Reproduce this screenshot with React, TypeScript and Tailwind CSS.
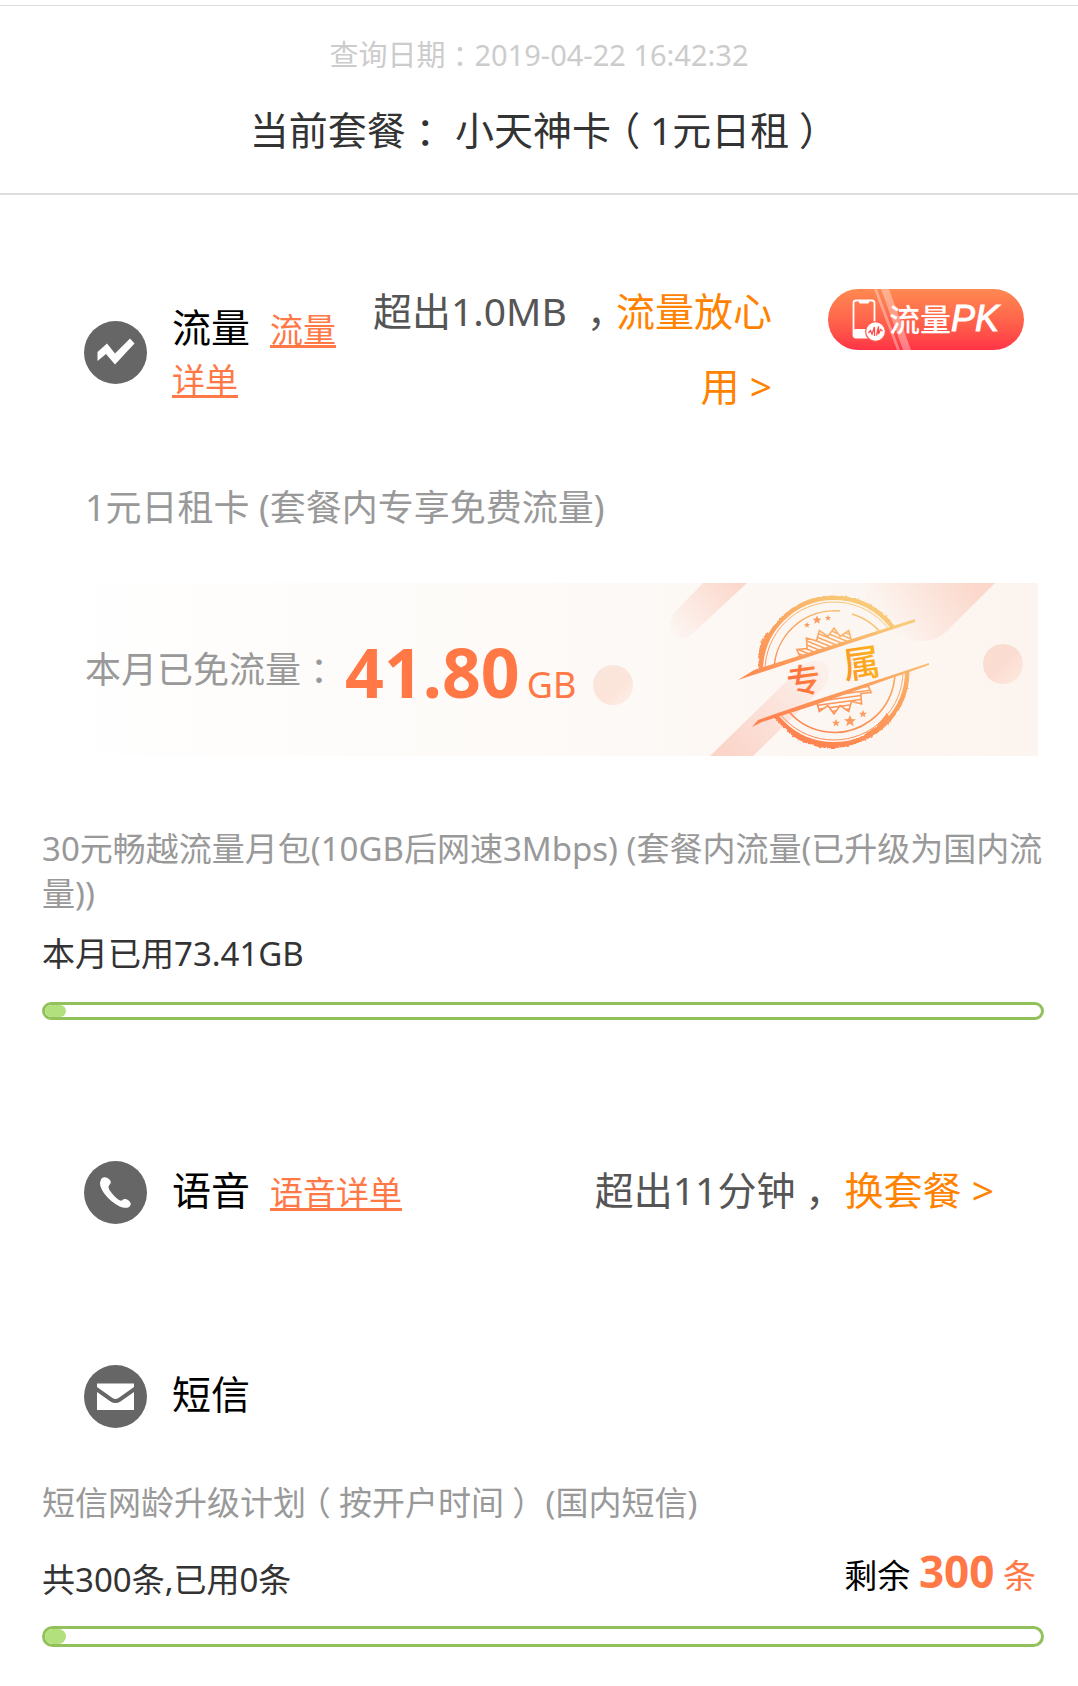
import React from 'react';

/** Full-width punctuation mark centred in its own em box. */
function Mark({ children }: { children: string }) {
  return (
    <span className="inline-block w-[1em] text-center leading-none [font-feature-settings:'halt'] font-['Noto_Sans_CJK_SC',sans-serif]">
      {children}
    </span>
  );
}

function TrendIcon() {
  return (
    <svg viewBox="0 0 63 63" className="size-[63px] shrink-0" aria-hidden="true">
      <circle cx="31.5" cy="31.5" r="31.5" fill="#666" />
      <path d="M13.5 31 L23 22.500 L31 32.500 L46 17.500 L50.500 22.500 L31 43.500 L22 33 L13.500 40 Z" fill="#fff" />
    </svg>
  );
}

function PhoneIcon() {
  return (
    <svg viewBox="0 0 63 63" className="size-[63px] shrink-0" aria-hidden="true">
      <circle cx="31.500" cy="31.500" r="31.500" fill="#666" />
      <path
        d="M17 18.500 C18 16 21 15.500 23.500 17 C26 18.500 27.500 20.500 26.500 22.500 C25.500 24 24.500 24.500 24.500 26.500 C25.500 30.500 32 37.500 36 39.500 C38.500 40.200 38.500 38 41 38 C43.500 38 46.500 40.500 46.800 43 C46.500 46 43.500 47.200 40 46.800 C29 44.500 15.500 30 16 21.500 Z"
        fill="#fff"
      />
    </svg>
  );
}

function MailIcon() {
  return (
    <svg viewBox="0 0 63 63" className="size-[63px] shrink-0" aria-hidden="true">
      <circle cx="31.500" cy="31.500" r="31.500" fill="#666" />
      <path d="M13 18.500 H50 V22 L34.500 33 Q31.500 35 28.500 33 L13 22 Z" fill="#fff" />
      <path d="M13 27 L26.500 36.500 Q31.500 39.500 36.500 36.500 L50 27 V45 H13 Z" fill="#fff" />
    </svg>
  );
}

function PkButton() {
  return (
    <button
      type="button"
      className="relative flex h-[61px] w-[196px] shrink-0 items-center overflow-hidden rounded-full bg-linear-to-b from-[#ff8951] to-[#ff3146] pl-[61px] text-white"
    >
      <svg viewBox="0 0 196 61" className="absolute inset-0 h-full w-full" aria-hidden="true">
        <path d="M46 0 H49 L72 61 H69 Z M53 0 H61 L83 61 H75 Z" fill="#fff" opacity="0.35" />
        <rect x="25.500" y="11.500" width="21" height="37" rx="2.500" fill="none" stroke="#fff" strokeWidth="1.800" />
        <rect x="31" y="12" width="10" height="2.500" rx="1" fill="#fff" />
        <rect x="25.500" y="40" width="21" height="9" rx="2" fill="#fff" />
        <circle cx="47.500" cy="42.500" r="10.500" fill="#ff5a4b" />
        <circle cx="47.500" cy="42.500" r="9.300" fill="#fff" />
        <path d="M40.500 44 L42.500 41.500 L44 45 L46.500 38 V47 M48.500 46.500 L50.500 37.500 V45 L52.500 40.500 L54.500 42" fill="none" stroke="#ff4a4a" strokeWidth="1.300" />
      </svg>
      <span className="relative pb-[2px] text-[31px] leading-none font-medium whitespace-nowrap">
        流量
        <span className="font-['Liberation_Sans',sans-serif] text-[36px] font-normal italic [-webkit-text-stroke:1px_white]">PK</span>
      </span>
    </button>
  );
}

const STAR = 'M0 -5 L1.500 -1.600 L5 -1.500 L2.200 0.800 L3.100 4.300 L0 2.300 L-3.100 4.300 L-2.200 0.800 L-5 -1.500 L-1.500 -1.600 Z';

const SPIKES = 18;
const BURST = Array.from({ length: SPIKES * 2 }, (_, i) => {
  const r = i % 2 ? 35 : 43;
  const a = (i * Math.PI) / SPIKES;
  return `${(792 + r * Math.sin(a)).toFixed(1)},${(88 - r * Math.cos(a)).toFixed(1)}`;
}).join(' ');

const HATCH_UPPER = Array.from({ length: 24 }, (_, i) => `M740 ${i * 4 + 12} l104 42`).join(' ');
const HATCH_LOWER = Array.from({ length: 24 }, (_, i) => `M740 ${i * 4 + 75} l104 -14`).join(' ');

function StampArt() {
  return (
    <svg
      viewBox="0 0 996 173"
      preserveAspectRatio="xMaxYMid slice"
      className="absolute inset-0 h-full w-full"
      aria-hidden="true"
    >
      <defs>
        <linearGradient id="ink" gradientUnits="userSpaceOnUse" x1="755" y1="150" x2="830" y2="25">
          <stop offset="0" stopColor="#ff8350" />
          <stop offset="0.550" stopColor="#fba25f" />
          <stop offset="1" stopColor="#f8cb78" />
        </linearGradient>
        <linearGradient id="word" gradientUnits="userSpaceOnUse" x1="745" y1="100" x2="835" y2="80">
          <stop offset="0" stopColor="#ff6a45" />
          <stop offset="1" stopColor="#fbb21c" />
        </linearGradient>
        <linearGradient id="beamA" gradientUnits="userSpaceOnUse" x1="695" y1="0" x2="635" y2="55">
          <stop offset="0" stopColor="#fbd8cc" />
          <stop offset="1" stopColor="#fbd8cc" stopOpacity="0.080" />
        </linearGradient>
        <linearGradient id="beamB" gradientUnits="userSpaceOnUse" x1="690" y1="173" x2="785" y2="78">
          <stop offset="0" stopColor="#fbd5ca" />
          <stop offset="1" stopColor="#fbd5ca" stopOpacity="0.150" />
        </linearGradient>
        <linearGradient id="beamC" gradientUnits="userSpaceOnUse" x1="930" y1="0" x2="860" y2="50">
          <stop offset="0" stopColor="#fbd8cb" />
          <stop offset="1" stopColor="#fbd8cb" stopOpacity="0.080" />
        </linearGradient>
        <linearGradient id="dot" x1="0" y1="0" x2="1" y2="1">
          <stop offset="0" stopColor="#f9e6dc" />
          <stop offset="0.600" stopColor="#fce4da" />
          <stop offset="1" stopColor="#fdf0e9" />
        </linearGradient>
        <linearGradient id="dotRight" x1="0" y1="0" x2="1" y2="1">
          <stop offset="0" stopColor="#f9ddd0" />
          <stop offset="0.500" stopColor="#fcdcd2" />
          <stop offset="1" stopColor="#fcebdf" />
        </linearGradient>
        <clipPath id="upper">
          <path d="M690 0 H890 V31 L696 96 H690 Z" />
        </clipPath>
        <clipPath id="lower">
          <path d="M690 173 H890 V80 L710 142 L690 149 Z" />
        </clipPath>
        <clipPath id="burst">
          <polygon points={BURST} />
        </clipPath>
        <filter id="rough" x="-10%" y="-10%" width="120%" height="120%">
          <feTurbulence type="fractalNoise" baseFrequency="0.250" numOctaves="2" seed="4" />
          <feDisplacementMap in="SourceGraphic" scale="3" xChannelSelector="R" yChannelSelector="G" />
        </filter>
      </defs>

      <path d="M661 0 H705 L650 51 Q640 60 630 52 Q624 42 632 30 Z" fill="url(#beamA)" />
      <path d="M668 173 H711 L782 104 Q791 92 784 80 Q770 74 759 84 Z" fill="url(#beamB)" />
      <path d="M826 0 H953 L905 48 Q890 62 870 57 L836 40 Q820 22 826 0 Z" fill="url(#beamC)" />
      <circle cx="571" cy="102" r="20" fill="url(#dot)" />
      <circle cx="961" cy="81" r="20" fill="url(#dotRight)" />

      {[
        { clip: 'url(#upper)', hatch: HATCH_UPPER },
        { clip: 'url(#lower)', hatch: HATCH_LOWER },
      ].map(({ clip, hatch }) => (
        <g key={clip} clipPath={clip} fill="none" stroke="url(#ink)">
          <circle cx="792" cy="88" r="73" strokeWidth="4" />
          <circle cx="792" cy="88" r="74" strokeWidth="3" filter="url(#rough)" />
          <circle cx="792" cy="88" r="69" strokeWidth="1" />
          <path d="M732 88 A60.500 60.500 0 0 1 798 28 M810 31 A60.500 60.500 0 1 1 732 88" strokeWidth="1.600" />
          <polygon points={BURST} strokeWidth="1.600" />
          <path d={hatch} clipPath="url(#burst)" strokeWidth="1.500" />
        </g>
      ))}
      <g filter="url(#rough)" fill="none" stroke="url(#ink)">
        <path d="M722 56 Q717 70 719 84 M726 50 L720 66" strokeWidth="4" />
        <path d="M746 147 Q768 165 794 163 Q826 160 846 132" strokeWidth="4" />
      </g>
      <g fill="url(#ink)">
        <path d="M696 97 L712 87 L750 75 L873 36 V39 L751 79 Z" />
        <path d="M710 144 L716 137 L768 119 L887 80 V82 L770 123 L720 139 Z" />
      </g>
      <g fill="#fb9d62">
        <path d={STAR} transform="translate(765 42) scale(.6)" />
        <path d={STAR} transform="translate(775 37) scale(.9)" />
        <path d={STAR} transform="translate(786 35) scale(.6)" />
        <path d={STAR} transform="translate(794 140) scale(.8)" />
        <path d={STAR} transform="translate(808 138) scale(1.200)" />
        <path d={STAR} transform="translate(821 131) scale(.8)" />
      </g>
      <g fill="url(#word)" className="font-['Noto_Sans_CJK_SC',sans-serif] font-medium">
        <text x="745" y="110" fontSize="34" transform="rotate(-8 762 98)">专</text>
        <text x="801" y="94" fontSize="37" transform="rotate(-8 819 80)">属</text>
      </g>
    </svg>
  );
}

function Meter({ label, percent, tall }: { label: string; percent: number; tall?: boolean }) {
  return (
    <div
      role="progressbar"
      aria-label={label}
      aria-valuenow={percent}
      aria-valuemin={0}
      aria-valuemax={100}
      className={`${tall ? 'h-[21px]' : 'h-[18px]'} rounded-full border-[3px] border-[#92c15c]`}
    >
      <div className="h-full min-w-[21px] rounded-full bg-[#b2e07c]" style={{ width: `${percent}%` }} />
    </div>
  );
}

const detailLink = 'ml-5 text-[33px] leading-none text-[#ff7846] underline decoration-[3px] underline-offset-[3px]';

export default function App() {
  return (
    <div className="min-h-screen bg-white pt-[5px] pb-10 text-[#333] font-['Noto_Sans','Noto_Sans_CJK_SC',sans-serif]" lang="zh-CN">
      <header className="border-t border-b-2 border-t-[#ddd] border-b-[#ddd] pt-[29px] pb-[33px] text-center">
        <p className="text-[29px] leading-10 text-[#ccc]">
          查询日期<Mark>：</Mark>2019-04-22 16:42:32
        </p>
        <h1 className="mt-[25px] text-[39px] leading-[60px]">
          当前套餐<Mark>：</Mark> 小天神卡<Mark>（</Mark>1元日租<Mark>）</Mark>
        </h1>
      </header>

      <main className="pr-[34px] pl-[42px]">
        <section className="pt-[78px]">
          <div className="flex min-h-[158px] items-center pr-5 pl-[42px]">
            <TrendIcon />
            <h2 className="ml-[25px] w-[180px] shrink-0 text-[39px] leading-[50px] text-black">
              流量
              <a href="#data" className={detailLink}>流量详单</a>
            </h2>
            <p className="ml-auto w-[400px] self-start text-right text-[39px] leading-[75px] text-[#555]">
              超出1.0MB <Mark>，</Mark>
              <a href="#carefree" className="text-[#ff8200]">流量放心用 &gt;</a>
            </p>
            <div className="ml-14 self-start pt-4">
              <PkButton />
            </div>
          </div>

          <p className="mt-[52px] pl-[43px] text-[36px] leading-[50px] text-[#999]">1元日租卡 (套餐内专享免费流量)</p>

          <div className="relative mt-[50px] mr-[6px] flex h-[173px] items-center overflow-hidden bg-linear-to-r from-white via-[#fdfaf7] to-[#fcf4ef] pl-[43px] text-[36px]">
            <StampArt />
            <p className="relative text-[#999]">
              本月已免流量<Mark>：</Mark>
            </p>
            <p className="relative ml-2 pt-1 text-[#ff7846]">
              <strong className="text-[68px] leading-[90px]">41.80</strong>
              <span className="ml-[7px]">GB</span>
            </p>
          </div>

          <p className="mt-[70px] text-[33px] leading-[45px] text-[#999]">
            30元畅越流量月包(10GB后网速3Mbps) (套餐内流量(已升级为国内流量))
          </p>
          <p className="mt-[13px] mb-[23px] text-[33px] leading-[50px]">本月已用73.41GB</p>
          <Meter label="本月已用流量" percent={2} />
        </section>

        <section className="mt-[135px] flex min-h-[75px] items-center pr-[50px] pl-[42px]">
          <PhoneIcon />
          <h2 className="ml-[25px] pb-1.5 text-[39px] leading-[69px] text-black">
            语音
            <a href="#voice" className={detailLink}>语音详单</a>
          </h2>
          <p className="ml-auto pb-1.5 text-[39px] leading-[69px] text-[#555]">
            超出11分钟<Mark>，</Mark>{' '}
            <a href="#plans" className="text-[#ff8200]">换套餐 &gt;</a>
          </p>
        </section>

        <section className="mt-[129px]">
          <div className="flex min-h-[75px] items-center pl-[42px]">
            <MailIcon />
            <h2 className="ml-[25px] pb-1.5 text-[39px] leading-[69px] text-black">短信</h2>
          </div>
          <p className="mt-[46px] text-[33px] leading-[45px] text-[#999]">
            短信网龄升级计划<Mark>（</Mark>按开户时间<Mark>）</Mark> (国内短信)
          </p>
          <div className="mt-5 mb-4 flex min-h-[65px] items-center justify-between pr-2 text-[33px] leading-[61px]">
            <p className="pt-1">共300条,已用0条</p>
            <p className="pb-1 text-black">
              剩余 <strong className="text-[44px] leading-none text-[#ff7846]">300</strong>{' '}
              <span className="text-[#ff7846]">条</span>
            </p>
          </div>
          <Meter label="已用短信" percent={2} tall />
        </section>
      </main>
    </div>
  );
}
